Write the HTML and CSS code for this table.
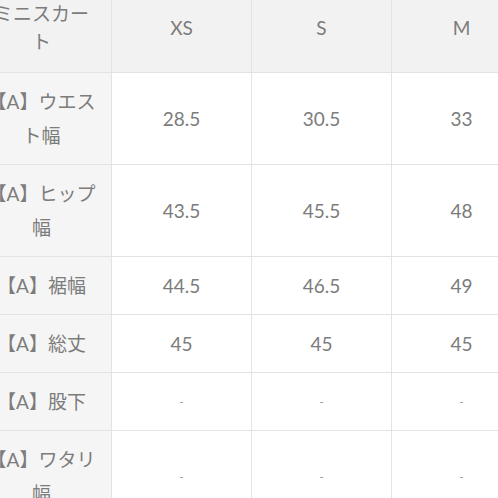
FILE: index.html
```html
<!DOCTYPE html>
<html lang="ja">
<head>
<meta charset="utf-8">
<link rel="stylesheet" href="styles.css">
</head>
<body>
<div class="crop">
<table class="size-table">
  <colgroup>
    <col class="c-label"><col class="c-val"><col class="c-val"><col class="c-val">
  </colgroup>
  <thead>
    <tr>
      <th class="label">ミニスカート</th>
      <th>XS</th>
      <th>S</th>
      <th>M</th>
    </tr>
  </thead>
  <tbody>
    <tr><th class="label">【A】ウエスト幅</th><td>28.5</td><td>30.5</td><td>33</td></tr>
    <tr><th class="label">【A】ヒップ幅</th><td>43.5</td><td>45.5</td><td>48</td></tr>
    <tr><th class="label">【A】裾幅</th><td>44.5</td><td>46.5</td><td>49</td></tr>
    <tr><th class="label">【A】総丈</th><td>45</td><td>45</td><td>45</td></tr>
    <tr><th class="label">【A】股下</th><td class="dash">-</td><td class="dash">-</td><td class="dash">-</td></tr>
    <tr><th class="label">【A】ワタリ幅</th><td class="dash">-</td><td class="dash">-</td><td class="dash">-</td></tr>
  </tbody>
</table>
</div>
</body>
</html>
```

FILE: styles.css
```css
html, body {
  margin: 0;
  padding: 0;
  background: #ffffff;
}
body {
  width: 498px;
  height: 498px;
  overflow: hidden;
}
.crop {
  margin: -18px 0 0 -29px;
}
.size-table {
  border-collapse: collapse;
  table-layout: fixed;
  width: 560px;
  font-family: Lato, "Noto Sans CJK JP", sans-serif;
  font-size: 19px;
  color: #7c7c7c;
}
.c-label { width: 140px; }
.c-val { width: 140px; }
.size-table th,
.size-table td {
  border: 1px solid #e3e3e3;
  text-align: center;
  vertical-align: middle;
  font-weight: normal;
  line-height: 34px;
  padding: 11.5px 15px;
}
.size-table thead th {
  background: #f2f2f2;
  line-height: 28px;
  padding: 16.5px 15px;
}
.size-table tbody th.label {
  background: #f5f5f5;
}
.size-table td {
  background: #ffffff;
}
.size-table td.dash {
  font-size: 12px;
  color: #999;
}
```
